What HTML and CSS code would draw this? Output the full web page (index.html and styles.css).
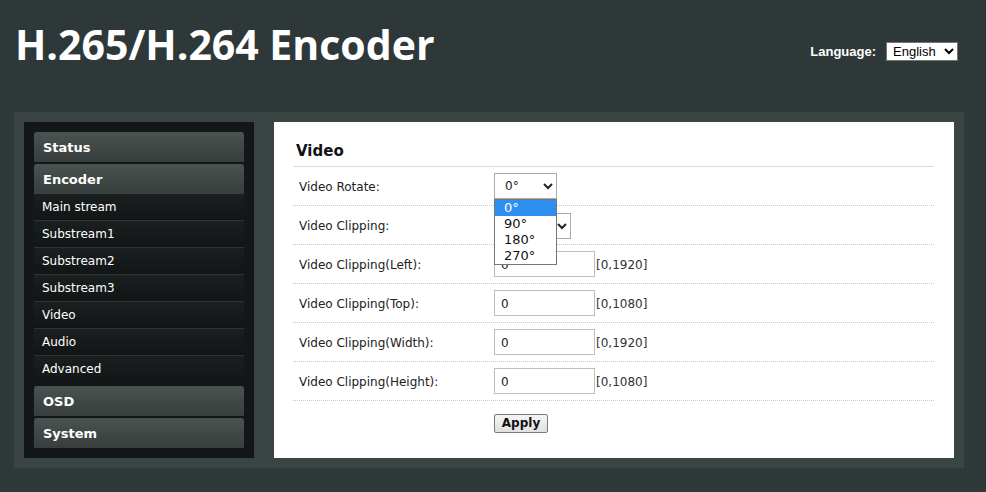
FILE: index.html
```html
<!DOCTYPE html>
<html>
<head>
<meta charset="utf-8">
<link rel="stylesheet" href="styles.css">
</head>
<body>
<header class="top">
  <h1 class="title">H.265/H.264 Encoder</h1>
  <div class="lang">
    <span class="lang-label">Language:</span>
    <select class="lang-select"><option>English</option></select>
  </div>
</header>
<main class="frame">
  <nav class="side">
    <div class="grp">Status</div>
    <div class="grp">Encoder</div>
    <div class="item">Main stream</div>
    <div class="item">Substream1</div>
    <div class="item">Substream2</div>
    <div class="item">Substream3</div>
    <div class="item">Video</div>
    <div class="item">Audio</div>
    <div class="item last">Advanced</div>
    <div class="grp">OSD</div>
    <div class="grp">System</div>
  </nav>
  <section class="content">
    <h2 class="heading">Video</h2>
    <div class="row">
      <div class="label">Video Rotate:</div>
      <div class="val">
        <div class="dd">
          <select class="sel sel-rot"><option>0°</option></select>
          <ul class="popup">
            <li class="on">0°</li>
            <li>90°</li>
            <li>180°</li>
            <li>270°</li>
          </ul>
        </div>
      </div>
    </div>
    <div class="row">
      <div class="label">Video Clipping:</div>
      <div class="val"><select class="sel sel-clip"><option>Disable</option></select></div>
    </div>
    <div class="row">
      <div class="label">Video Clipping(Left):</div>
      <div class="val"><input class="num" value="0"><span class="range">[0,1920]</span></div>
    </div>
    <div class="row">
      <div class="label">Video Clipping(Top):</div>
      <div class="val"><input class="num" value="0"><span class="range">[0,1080]</span></div>
    </div>
    <div class="row">
      <div class="label">Video Clipping(Width):</div>
      <div class="val"><input class="num" value="0"><span class="range">[0,1920]</span></div>
    </div>
    <div class="row">
      <div class="label">Video Clipping(Height):</div>
      <div class="val"><input class="num" value="0"><span class="range">[0,1080]</span></div>
    </div>
    <div class="actions">
      <button class="apply">Apply</button>
    </div>
  </section>
</main>
</body>
</html>
```
FILE: styles.css
```css
html, body {
  margin: 0;
  padding: 0;
}
body {
  background: #2f3838;
  width: 986px;
  height: 492px;
  overflow: hidden;
  font-family: "DejaVu Sans", Verdana, sans-serif;
}
.top {
  height: 112px;
  display: flex;
  align-items: flex-start;
  justify-content: space-between;
  padding: 0 28px 0 15px;
  box-sizing: border-box;
}
.title {
  margin: 17px 0 0 0;
  font-family: "Open Sans", sans-serif;
  font-weight: 700;
  font-size: 41px;
  line-height: 54px;
  color: #ffffff;
  letter-spacing: 0;
}
.lang {
  margin-top: 42px;
  display: flex;
  align-items: center;
  gap: 10px;
}
.lang-label {
  font-family: "Liberation Sans", Arial, sans-serif;
  font-weight: 700;
  font-size: 13px;
  color: #ffffff;
}
.lang-select {
  width: 72px;
  height: 19px;
  font-family: "Liberation Sans", Arial, sans-serif;
  font-size: 13px;
  border: 1px solid #767676;
  border-radius: 0;
  background: #fff;
  padding: 0 0 0 2px;
  color: #000;
}
.frame {
  margin: 0 22px 0 14px;
  background: #3a4442;
  padding: 10px;
  display: flex;
  gap: 20px;
  height: 336px;
}
.side {
  width: 230px;
  background: #131717;
  padding: 10px;
  box-sizing: border-box;
  display: flex;
  flex-direction: column;
}
.grp {
  flex: none;
  height: 30px;
  line-height: 31px;
  padding-left: 9px;
  color: #ffffff;
  font-weight: 700;
  font-size: 13px;
  border-radius: 3px 3px 0 0;
  background: linear-gradient(#4a5351, #373e3d);
  margin-bottom: 2px;
}
.item {
  flex: none;
  height: 26px;
  line-height: 27px;
  padding-left: 8px;
  color: #ffffff;
  font-size: 12px;
  border-bottom: 1px solid #2e3434;
  background: linear-gradient(#1a1f1f, #121515);
}
.item.last {
  border-bottom: none;
  height: 27px;
  margin-bottom: 3px;
}
.grp + .item {
  margin-top: -2px;
}
.content {
  width: 680px;
  background: #ffffff;
  padding: 17px 20px 0 19px;
  box-sizing: border-box;
}
.heading {
  margin: 0;
  font-size: 15px;
  font-weight: 700;
  color: #111;
  padding-left: 3px;
  height: 27px;
  line-height: 24px;
  border-bottom: 1px solid #dcdcdc;
}
.row {
  display: flex;
  align-items: center;
  height: 38px;
  border-bottom: 1px dotted #c8c8c8;
}
.label {
  width: 201px;
  padding: 2px 0 0 6px;
  box-sizing: border-box;
  font-size: 12px;
  color: #222;
}
.val {
  display: flex;
  align-items: center;
}
.dd {
  position: relative;
}
.sel {
  height: 26px;
  font-family: "DejaVu Sans", Verdana, sans-serif;
  font-size: 12px;
  border: 1px solid #aaaaaa;
  border-radius: 0;
  background: #fff;
  color: #222;
  padding: 0 0 0 6px;
}
.sel-rot {
  width: 63px;
}
.sel-clip {
  width: 77px;
  margin-top: 2px;
}
.popup {
  position: absolute;
  left: 0;
  top: 26px;
  width: 63px;
  margin: 0;
  padding: 0;
  list-style: none;
  background: #fff;
  border: 1px solid #767676;
  box-sizing: border-box;
  z-index: 5;
  font-size: 13px;
  color: #111;
}
.popup li {
  height: 16px;
  line-height: 16px;
  padding-left: 9px;
}
.popup li.on {
  background: #2f8ff0;
  color: #fff;
}
.num {
  width: 101px;
  height: 26px;
  box-sizing: border-box;
  border: 1px solid #bdbdbd;
  padding: 2px 0 0 6px;
  font-family: "DejaVu Sans", Verdana, sans-serif;
  font-size: 12px;
  color: #222;
  border-radius: 0;
}
.range {
  margin-left: 1px;
  padding-top: 2px;
  font-size: 12px;
  color: #333;
}
.actions {
  padding: 11px 0 0 201px;
}
.apply {
  height: 19px;
  width: 54px;
  padding: 0;
  font-family: "DejaVu Sans", Verdana, sans-serif;
  font-weight: 700;
  font-size: 12px;
  color: #111;
  background: linear-gradient(#f4f4f4, #e0e0e0);
  border: 1px solid #7a7a7a;
  border-radius: 2px;
}
```
